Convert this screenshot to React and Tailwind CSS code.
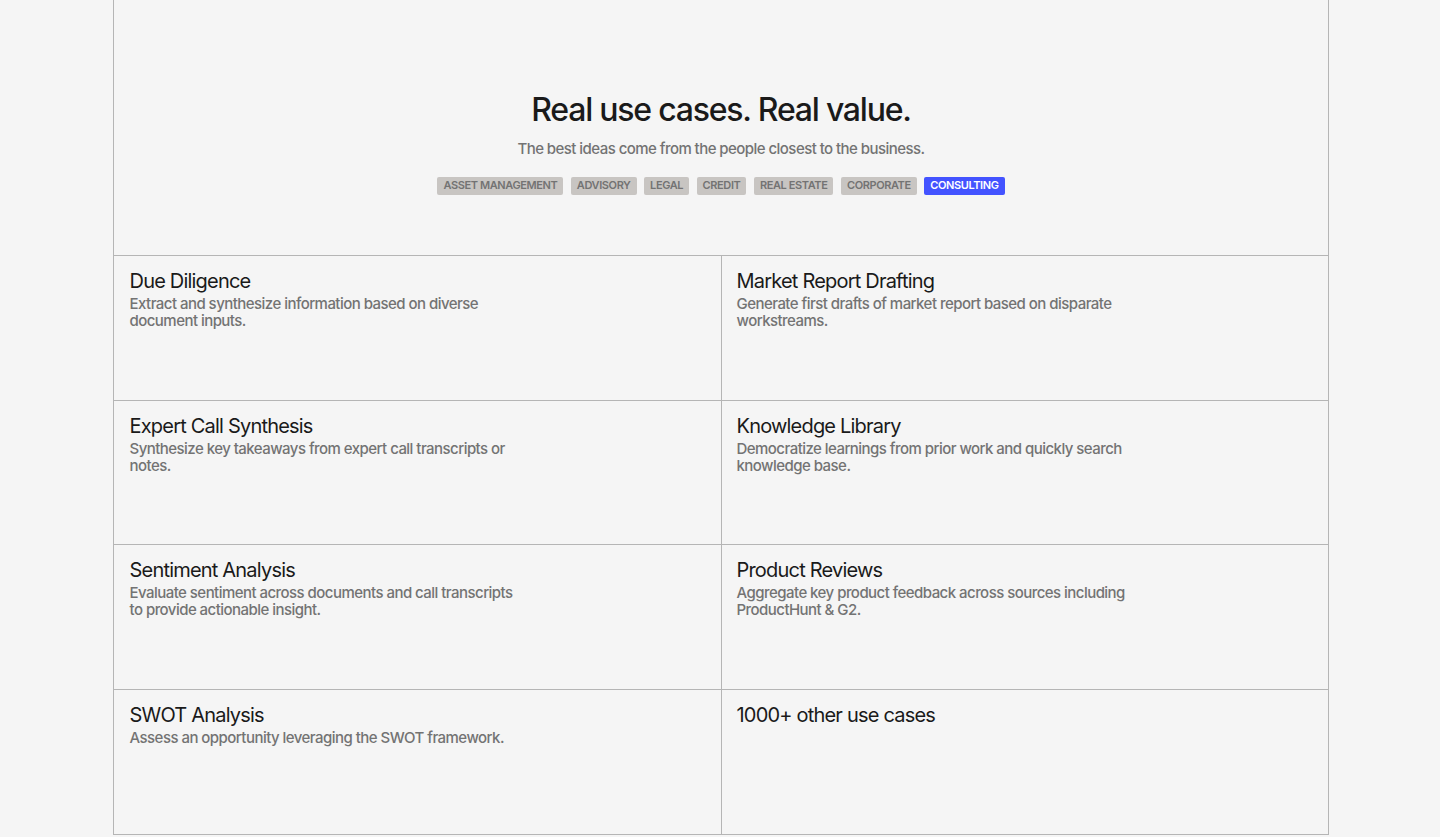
const tags = ["ASSET MANAGEMENT", "ADVISORY", "LEGAL", "CREDIT", "REAL ESTATE", "CORPORATE"];

const cases = [
  { title: "Due Diligence", text: "Extract and synthesize information based on diverse document inputs." },
  { title: "Market Report Drafting", text: "Generate first drafts of market report based on disparate workstreams." },
  { title: "Expert Call Synthesis", text: "Synthesize key takeaways from expert call transcripts or notes." },
  { title: "Knowledge Library", text: "Democratize learnings from prior work and quickly search knowledge base." },
  { title: "Sentiment Analysis", text: "Evaluate sentiment across documents and call transcripts to provide actionable insight." },
  { title: "Product Reviews", text: "Aggregate key product feedback across sources including ProductHunt & G2." },
  { title: "SWOT Analysis", text: "Assess an opportunity leveraging the SWOT framework." },
  { title: "1000+ other use cases", text: "" },
];

const App = () => {
  return (
    <div className="h-[837px] overflow-hidden bg-[#f5f5f5] font-['Inter',sans-serif]">
      <div className="ml-[113px] w-[1216px] border-x border-[#b5b5b5]">
        <div className="flex h-[255px] flex-col items-center pt-[91px]">
          <h2 className="text-[32px] leading-[38px] font-[450] tracking-[-1.22px] text-[#1a1a1a]">
            Real use cases. Real value.
          </h2>
          <p className="mt-[9.5px] text-[15px] leading-[20px] font-[450] tracking-[-0.55px] text-[#737373]">
            The best ideas come from the people closest to the business.
          </p>
          <div className="mt-[18.5px] flex gap-[7.5px]">
            {tags.map((tag) => (
              <span key={tag} className="rounded-[2px] bg-[#c8c5c2] px-[6px] pb-[1px] text-[11px] leading-[17px] font-semibold tracking-[-0.4px] text-[#737373]">
                {tag}
              </span>
            ))}
            <span className="rounded-[2px] bg-[#4353ff] px-[6px] pb-[1px] text-[11px] leading-[17px] font-semibold tracking-[-0.4px] text-white">
              CONSULTING
            </span>
          </div>
        </div>
        <div className="grid grid-cols-[608px_1fr] border-t border-[#b5b5b5]">
          {cases.map((item, i) => (
            <div key={item.title} className={`h-[144.67px] border-b border-[#b5b5b5] pt-[13px] ${i % 2 === 0 ? "border-r pl-[15.5px]" : "pl-[14.5px]"}`}>
              <h3 className="text-[20px] leading-[24px] font-[420] tracking-[-0.8px] text-[#1a1a1a]">{item.title}</h3>
              <p className="mt-[2px] max-w-[395px] text-[15px] leading-[17px] font-[450] tracking-[-0.54px] text-[#737373]">{item.text}</p>
            </div>
          ))}
        </div>
      </div>
    </div>
  );
};

export default App;
